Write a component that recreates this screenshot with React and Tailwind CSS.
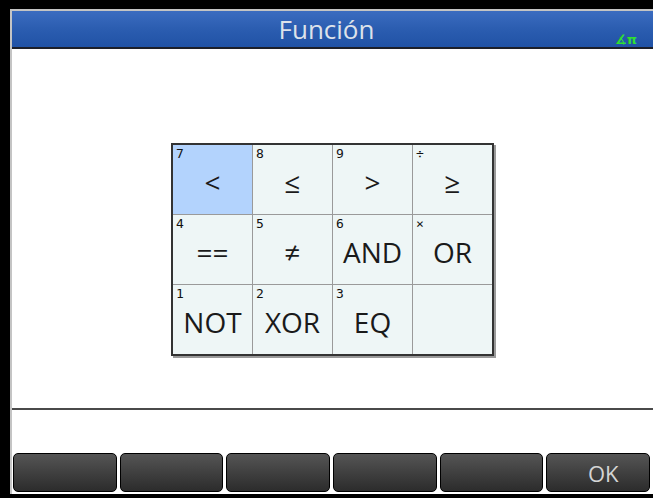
import React from 'react';

// Calculator "Función" picker: 4x3 grid of relational / logical operators
const cells = [
  { key: '7', label: '<', selected: true },
  { key: '8', label: '≤' },
  { key: '9', label: '>' },
  { key: '÷', label: '≥' },
  { key: '4', label: '==' },
  { key: '5', label: '≠' },
  { key: '6', label: 'AND' },
  { key: '×', label: 'OR' },
  { key: '1', label: 'NOT' },
  { key: '2', label: 'XOR' },
  { key: '3', label: 'EQ' },
  { key: '', label: '' },
];

const softKeys = ['', '', '', '', '', 'OK'];

const Cell = ({ cell }) => (
  <div className={`flex flex-col ${cell.selected ? 'bg-[#b3d3fd]' : 'bg-[#eef6f6]'}`}>
    <div className="h-[13px] pl-[3px] pt-[2px] text-[13px] leading-none text-[#111] font-['DejaVu_Sans_Mono',monospace]">
      {cell.key}
    </div>
    <div className="flex flex-1 items-center justify-center pb-[9px] text-[28px] leading-none text-[#1a1a1a] font-['Open_Sans',sans-serif]">
      {cell.label}
    </div>
  </div>
);

export default function App() {
  return (
    <div className="flex h-[498px] w-[653px] bg-black pl-[10px] pt-[9px] pb-[4px]">
      <div className="flex flex-1 flex-col border-l-2 border-t-2 border-[#c4c4c4] bg-white">
        {/* title bar */}
        <div className="relative flex h-[36px] items-center justify-center bg-gradient-to-b from-[#3b6cc0] via-[#2b5db0] to-[#2052a6] pr-[12px]">
          <span className="text-[26px] leading-none text-[#dde2ea] font-['Open_Sans',sans-serif]">Función</span>
          <span className="absolute bottom-[1px] right-[16px] text-[13px] font-bold leading-none text-[#2fe02f] font-['DejaVu_Sans',sans-serif]">
            ∡π
          </span>
        </div>
        <div className="h-[2px] bg-[#1c1f2a]" />

        {/* grid */}
        <div className="flex h-[359px] justify-center pt-[94px]">
          <div className="grid h-fit grid-cols-[repeat(4,79px)] grid-rows-[repeat(3,69px)] gap-px border-2 border-[#333] bg-[#9a9a9a] shadow-[2px_2px_0_#9a9a9a]">
            {cells.map((cell, i) => (
              <Cell key={i} cell={cell} />
            ))}
          </div>
        </div>

        <div className="h-[2px] bg-[#4a4a4a]" />
        <div className="h-[43px]" />

        {/* soft keys */}
        <div className="flex h-[39px] gap-[3px] pl-px pr-[3px]">
          {softKeys.map((k, i) => (
            <div
              key={i}
              className="flex flex-1 items-center justify-center rounded-[5px] border border-black bg-gradient-to-b from-[#555] to-[#2c2c2c] pl-[10px] text-[22px] leading-none text-[#d4d4d4] font-['Open_Sans',sans-serif]"
            >
              {k}
            </div>
          ))}
        </div>
        <div className="h-[2px]" />
      </div>
    </div>
  );
}
